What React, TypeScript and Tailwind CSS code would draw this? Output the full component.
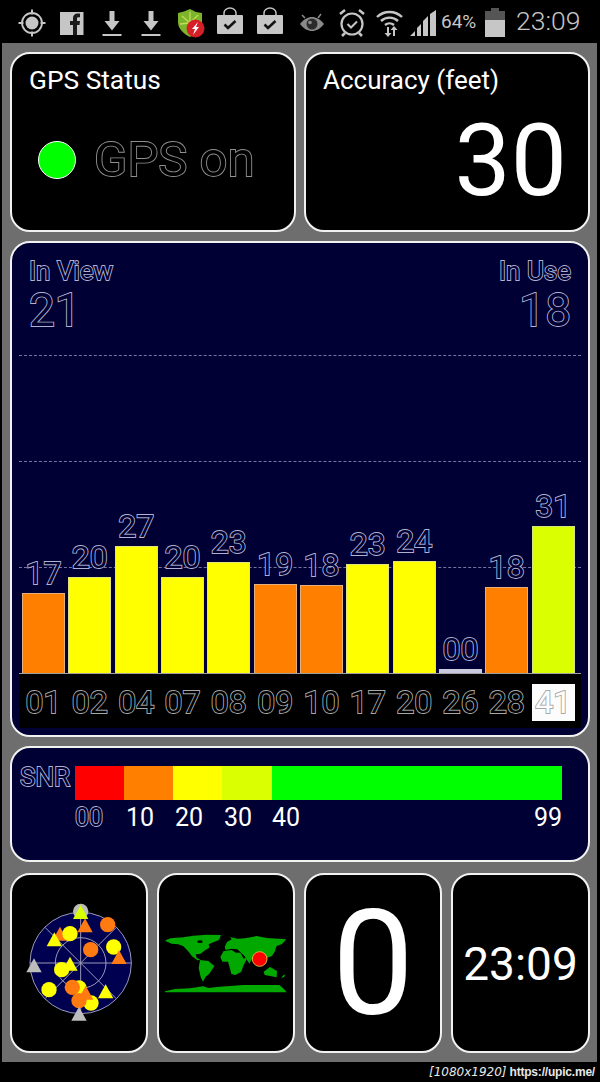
import React from "react";

const ICON = "#c6c6c6";

function Ico({ w, ml, children }: { w: number; ml: number; children: React.ReactNode }) {
  return (
    <svg width={w} height={43} viewBox={`0 0 ${w} 43`} style={{ marginLeft: ml }} className="shrink-0">
      {children}
    </svg>
  );
}

function Download({ ml }: { ml: number }) {
  return (
    <Ico w={20} ml={ml}>
      <path d="M7.5 11h5v10h5l-7.5 9.500l-7.500-9.500h5z" fill={ICON} />
      <rect x="0.500" y="34" width="19" height="2" fill={ICON} />
    </Ico>
  );
}

function Bag({ ml }: { ml: number }) {
  return (
    <Ico w={26} ml={ml}>
      <rect x="0" y="15" width="26" height="19" rx="1" fill={ICON} />
      <path d="M7 15v-2a6 5 0 0 1 12 0v2" fill="none" stroke={ICON} strokeWidth="1.500" />
      <path d="M7.500 24.500l3.500 3.500l7.500-7" fill="none" stroke="#111" strokeWidth="2.500" />
    </Ico>
  );
}

function StatusBar() {
  return (
    <div className="flex h-[43px] shrink-0 items-center bg-black">
      <Ico w={28} ml={18}>
        <circle cx="14" cy="23" r="6.500" fill={ICON} />
        <circle cx="14" cy="23" r="10" fill="none" stroke={ICON} strokeWidth="1.800" />
        <path d="M14 9.500v5M14 31.500v5M.5 23h5M22.500 23h5" stroke={ICON} strokeWidth="2" />
      </Ico>
      <Ico w={24} ml={14}>
        <rect x="0" y="12" width="23.500" height="23" fill={ICON} />
        <path d="M13 35V25h-3v-4h3v-3c0-3 2-4.500 4.500-4.500h2.500v3.800h-1.700c-1.100 0-1.300.6-1.300 1.400V21h3l-.5 4h-2.500v10z" fill="#1a1a1a" />
      </Ico>
      <Download ml={18} />
      <Download ml={19} />
      <Ico w={28} ml={16}>
        <path d="M1 13l6-1.500L13 9l6 3l6 1v9c0 7-6 12-12 15C7 34 1 29 1 22z" fill="#7cb52c" />
        <path d="M5 16l8 7M13 12v10M21 15l-7 7M3 24l9-1" stroke="#c4dc5a" strokeWidth="1.300" fill="none" />
        <circle cx="18.500" cy="28.500" r="9" fill="#d71f26" />
        <path d="M21 22l-6 7h3l-2 6l6-8h-3z" fill="#fff" />
      </Ico>
      <Bag ml={12} />
      <Bag ml={14} />
      <Ico w={24} ml={17}>
        <path d="M0 24c4-5 8-7 12-7s8 2 12 7c-4 5-8 7-12 7s-8-2-12-7z" fill="#8a8a8a" />
        <circle cx="12" cy="24" r="5.500" fill="#2b2b2b" />
        <circle cx="10" cy="22.500" r="1.800" fill="#8a8a8a" />
        <path d="M2 15l3 3M21 14l-3 4" stroke="#8a8a8a" strokeWidth="1.500" />
      </Ico>
      <Ico w={26} ml={15}>
        <circle cx="13" cy="24" r="10.500" fill="none" stroke={ICON} strokeWidth="2.200" />
        <path d="M8.500 24l3.500 3.500l6-6" fill="none" stroke={ICON} strokeWidth="2" />
        <path d="M1 14l5-4M25 14l-5-4M6 33l-3 3M20 33l3 3" stroke={ICON} strokeWidth="2.500" />
      </Ico>
      <Ico w={27} ml={11}>
        <path d="M1 17a18 18 0 0 1 25 0M5 21a12.500 12.500 0 0 1 17 0M9 25a7 7 0 0 1 9 0" fill="none" stroke={ICON} strokeWidth="2.400" />
        <path d="M11 27v6h-2.500l3.500 4l3.500-4h-2.500v-6zM17 36v-6h-2.500l3.500-4l3.500 4h-2.500v6z" fill={ICON} />
      </Ico>
      <Ico w={26} ml={7}>
        <path d="M0 36l5-5v5zM7 36v-8l4-4v12zM13 36V21l5-5v20zM20 36V14l6-4v26z" fill={ICON} />
      </Ico>
      <span className="ml-[5px] w-[37px] shrink-0 text-[19px] leading-none text-[#c6c6c6]">64%</span>
      <Ico w={20} ml={7}>
        <path d="M6 8h8v3h6v9H0v-9h6z" fill="#555" />
        <rect x="0" y="20" width="20" height="17" fill={ICON} />
      </Ico>
      <span className="ml-[11px] text-[26.500px] leading-none font-light text-[#c6c6c6]">23:09</span>
    </div>
  );
}

function Card({ className = "", children }: { className?: string; children?: React.ReactNode }) {
  return (
    <div className={`rounded-[20px] border-2 border-[#f2f2f2] ${className}`}>{children}</div>
  );
}

const NAVY = "bg-[#000034]";
const bars = [
  { id: "01", v: "17", h: 80, c: "bg-[#ff8000]" },
  { id: "02", v: "20", h: 96, c: "bg-[#ffff00]" },
  { id: "04", v: "27", h: 127, c: "bg-[#ffff00]" },
  { id: "07", v: "20", h: 96, c: "bg-[#ffff00]" },
  { id: "08", v: "23", h: 111, c: "bg-[#ffff00]" },
  { id: "09", v: "19", h: 89, c: "bg-[#ff8000]" },
  { id: "10", v: "18", h: 88, c: "bg-[#ff8000]" },
  { id: "17", v: "23", h: 109, c: "bg-[#ffff00]" },
  { id: "20", v: "24", h: 112, c: "bg-[#ffff00]" },
  { id: "26", v: "00", h: 4, c: "bg-[#c8c8e0]" },
  { id: "28", v: "18", h: 86, c: "bg-[#ff8000]" },
  { id: "41", v: "31", h: 147, c: "bg-[#d9ff00]" },
];

const BLUE_OUTLINE = "text-[#000034] opacity-[.99] [-webkit-text-stroke:1.800px_#b4b4d4] [paint-order:stroke_fill]";
const GRAY_OUTLINE = "opacity-[.99] [-webkit-text-stroke:1.800px_#ababab] [paint-order:stroke_fill]";

function Chart() {
  return (
    <Card className={`flex h-[496px] shrink-0 flex-col ${NAVY}`}>
      <div className="flex justify-between px-[17px] pt-[14px]">
        <div className={BLUE_OUTLINE}>
          <div className="text-[26px] leading-[28px]">In View</div>
          <div className="text-[46px] leading-[50px]">21</div>
        </div>
        <div className={`text-right ${BLUE_OUTLINE}`}>
          <div className="text-[26px] leading-[28px]">In Use</div>
          <div className="text-[46px] leading-[50px]">18</div>
        </div>
      </div>
      <div className="relative mx-[7px] flex-1">
        <div className="absolute inset-x-0 top-[20px] border-t border-dashed border-[#74749f]" />
        <div className="absolute inset-x-0 top-[126px] border-t border-dashed border-[#74749f]" />
        <div className="absolute inset-x-0 top-[232px] border-t border-dashed border-[#74749f]" />
        <div className="relative grid h-full grid-cols-12 items-end pr-[3px] pl-[3px]">
          {bars.map((b) => (
            <div key={b.id} className="flex flex-col pr-[3.400px]">
              <div className={`mb-[1px] text-center text-[32px] leading-[38px] ${BLUE_OUTLINE}`}>{b.v}</div>
              <div className={`${b.c} border-x border-t border-[#d0d0d0]/60`} style={{ height: b.h }} />
            </div>
          ))}
        </div>
      </div>
      <div className="mx-[7px] mb-[7px] grid h-[55px] shrink-0 grid-cols-12 items-center border-t border-[#a0a0a0] bg-black pr-[3px] pl-[3px]">
        {bars.map((b) => (
          <div key={b.id} className="pt-[2px] pr-[3.400px]">
            <div
              className={`h-[37px] text-center text-[32px] leading-[37px] ${GRAY_OUTLINE} ${
                b.id === "41" ? "bg-white text-white" : "text-black"
              }`}
            >
              {b.id}
            </div>
          </div>
        ))}
      </div>
    </Card>
  );
}

function Snr() {
  return (
    <Card className={`h-[116px] shrink-0 ${NAVY} flex pt-[18px] pl-[8px]`}>
      <div className={`w-[55px] shrink-0 text-[26px] leading-[22px] ${BLUE_OUTLINE}`}>SNR</div>
      <div className="w-[487px]">
        <div className="flex h-[34px]">
          <div className="w-[49px] bg-[#ff0000]" />
          <div className="w-[49px] bg-[#ff8000]" />
          <div className="w-[49px] bg-[#ffff00]" />
          <div className="w-[50px] bg-[#d9ff00]" />
          <div className="flex-1 bg-[#00ff00]" />
        </div>
        <div className="mt-[3px] flex text-[25px] leading-[30px] text-white">
          <div className={`w-[49px] ${BLUE_OUTLINE}`}>00</div>
          <div className="w-[49px] pl-[2px]">10</div>
          <div className="w-[49px] pl-[2px]">20</div>
          <div className="w-[50px] pl-[2px]">30</div>
          <div className="flex flex-1 justify-between">
            <span>40</span>
            <span>99</span>
          </div>
        </div>
      </div>
    </Card>
  );
}

type M = { k: "c" | "t"; x: number; y: number; f: string; r?: number };
const O = "#ff7a10";
const Y = "#ffff00";
const G = "#bdbdbd";
const marks: M[] = [
  { k: "c", x: 237, y: 125, f: G, r: 23 },
  { k: "t", x: 237, y: 130, f: "#d9ff00" },
  { k: "c", x: 318, y: 165, f: O },
  { k: "t", x: 175, y: 195, f: O },
  { k: "c", x: 205, y: 192, f: Y },
  { k: "t", x: 158, y: 212, f: Y },
  { k: "t", x: 250, y: 170, f: O },
  { k: "c", x: 336, y: 232, f: Y },
  { k: "t", x: 352, y: 265, f: O },
  { k: "c", x: 267, y: 240, f: O },
  { k: "c", x: 180, y: 300, f: Y },
  { k: "t", x: 205, y: 285, f: Y },
  { k: "t", x: 97, y: 290, f: G },
  { k: "c", x: 142, y: 360, f: Y },
  { k: "c", x: 232, y: 355, f: Y },
  { k: "c", x: 212, y: 353, f: O },
  { k: "c", x: 268, y: 400, f: Y },
  { k: "c", x: 232, y: 393, f: O },
  { k: "t", x: 252, y: 372, f: O },
  { k: "t", x: 312, y: 368, f: Y },
  { k: "t", x: 232, y: 435, f: G },
];

function Radar() {
  return (
    <svg width="134" height="176" viewBox="31 16 402 528">
      <circle cx="237" cy="280" r="152" fill="#000050" stroke="#9a9ab8" strokeWidth="3" />
      <circle cx="237" cy="280" r="76" fill="none" stroke="#9a9ab8" strokeWidth="3" />
      <path d="M85 280h304M237 128v304M130 173l214 214M344 173L130 387" stroke="#9a9ab8" strokeWidth="3" />
      {marks.map((m, i) =>
        m.k === "c" ? (
          <circle key={i} cx={m.x} cy={m.y} r={m.r ?? 23} fill={m.f} />
        ) : (
          <polygon key={i} points={`${m.x},${m.y - 24} ${m.x + 23},${m.y + 18} ${m.x - 23},${m.y + 18}`} fill={m.f} />
        ),
      )}
    </svg>
  );
}

function WorldMap() {
  return (
    <svg width="134" height="176" viewBox="27 16 402 528">
      <g fill="#00a800">
        <path d="M46 212L62 206L100 203L130 198L170 195L213 196L207 211L190 218L176 224L178 234L165 242L152 252L137 254L140 264L152 271L142 272L126 260L114 244L100 230L85 224L65 222L48 215Z" />
        <path d="M150 271L175 274L193 289L178 312L167 321L159 336L152 322L146 295Z" />
        <path d="M211 262L221 244L245 241L258 249L271 249L281 267L294 261L280 288L274 306L256 316L244 313L237 286L234 276L217 276Z" />
        <path d="M224 232L231 217L245 209L240 202L262 207L285 206L320 199L350 205L409 209L396 223L380 229L374 246L366 259L352 264L347 282L320 277L308 264L298 282L284 260L270 246L262 239L245 237L227 241Z" />
        <path d="M341 306L360 292L381 304L380 323L360 319L344 316Z" />
        <path d="M398 318L406 314L402 322L394 325Z" />
        <path d="M45 365L75 358L120 356L160 350L175 355L200 352L280 346L388 346L402 358L410 368L45 368Z" />
      </g>
      <ellipse cx="150" cy="216" rx="8" ry="4" fill="#000" />
      <circle cx="329" cy="268" r="22" fill="#ff0000" stroke="#e0b040" strokeWidth="3" />
    </svg>
  );
}

export default function App() {
  return (
    <div className="flex h-[1082px] w-[600px] flex-col overflow-hidden bg-black [font-family:Roboto,sans-serif]">
      <StatusBar />
      <div className="ml-[2px] flex h-[1019px] w-[595px] shrink-0 flex-col gap-[9px] bg-[#6e6e6e] pt-[9px] pr-[7px] pl-[8px]">
        <div className="flex h-[180px] shrink-0 gap-[8px]">
          <Card className="flex w-[286px] flex-col bg-black pt-[10px] pl-[17px]">
            <div className="text-[26.300px] leading-[32px] text-white">GPS Status</div>
            <div className="mt-[36px] flex items-center">
              <div className="ml-[9px] h-[38px] w-[38px] rounded-full border border-white bg-[#00ff00]" />
              <div className="ml-[18px] text-[49px] leading-[56px] text-black opacity-[.99] [-webkit-text-stroke:1.800px_#929292] [paint-order:stroke_fill]">
                GPS on
              </div>
            </div>
          </Card>
          <Card className="flex w-[286px] flex-col bg-black pt-[10px] pl-[17px]">
            <div className="text-[26px] leading-[32px] text-white">Accuracy (feet)</div>
            <div className="mt-[10px] pr-[21px] text-right text-[100px] leading-[110px] text-white">30</div>
          </Card>
        </div>
        <Chart />
        <Snr />
        <div className="mt-[2px] flex h-[180px] shrink-0 gap-[9px]">
          <Card className="flex w-[138px] items-center justify-center bg-black">
            <Radar />
          </Card>
          <Card className="flex w-[138px] items-center justify-center bg-black">
            <WorldMap />
          </Card>
          <Card className="flex w-[138px] items-center justify-center bg-black pt-[4px] text-[146px] leading-none text-white">0</Card>
          <Card className="flex w-[139px] items-center justify-center bg-black pt-[1px] text-[46px] leading-none text-white">23:09</Card>
        </div>
      </div>
      <div className="flex flex-1 items-center justify-end pr-[5px] leading-none text-[#e8e8e8]">
        <span className="mr-[3px] text-[12px] italic [font-family:'DejaVu_Sans',sans-serif]">[1080x1920]</span>
        <span className="text-[12px] font-bold tracking-[-0.2px] [font-family:'Liberation_Sans',sans-serif]">https://upic.me/</span>
      </div>
    </div>
  );
}
